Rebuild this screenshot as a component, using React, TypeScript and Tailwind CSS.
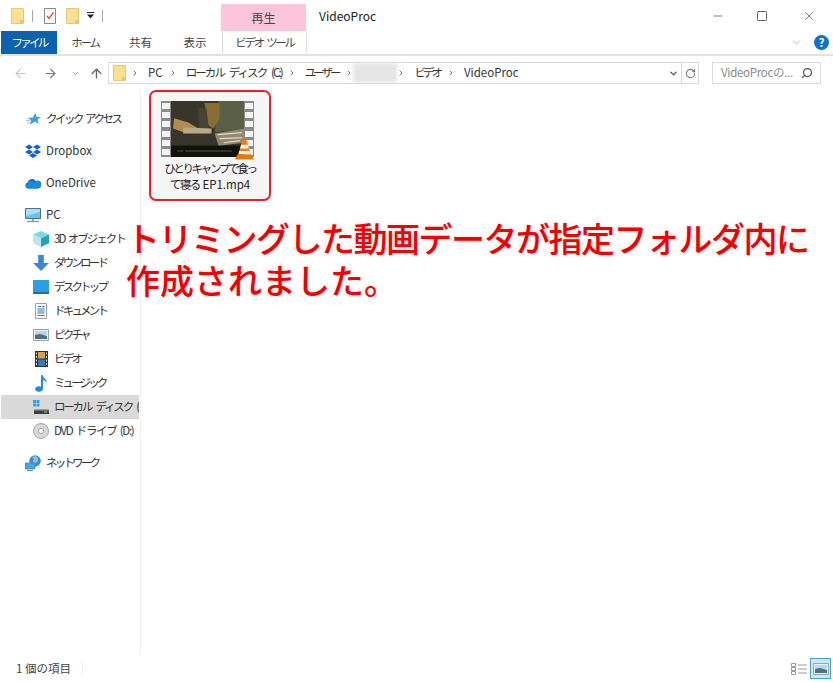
import { ArrowLeft, ArrowRight, ArrowUp, ChevronDown, ChevronRight, RotateCw, Search, X, Minus, Square } from 'lucide-react'
import type { ReactNode } from 'react'

const font = "font-['Noto_Sans_CJK_JP','Noto_Sans',sans-serif]"

function Folder({ className = 'w-[13px] h-[16px]' }: { className?: string }) {
    return (
        <svg viewBox="0 0 13 16" className={className}>
            <path d="M.5.5h12v15H.5z" fill="#fbe08f" stroke="#e6c877" />
            <path d="M9 12h3.5v3.5H9z" fill="#e9c566" />
        </svg>
    )
}

function Chevron() {
    return <ChevronRight className="w-[8px] h-[8px] text-[#777] shrink-0" strokeWidth={3} />
}

function Star() {
    return (
        <svg viewBox="0 0 16 16" className="w-[15px] h-[15px]">
            <path d="M10 .8l1.400 4.400 4.400.2-3.500 2.800 1.200 4.600-3.800-2.600L4 13.500l1.600-4.700L1.500 6h5.600z" fill="#3b9fe0" />
            <path d="M0 9h5M1 11.500h3" stroke="#8ec8ee" strokeWidth="1" />
        </svg>
    )
}

function Dropbox() {
    return (
        <svg viewBox="0 0 16 15" className="w-[16px] h-[15px]">
            <path d="M4 .5L8 3 4 5.500 0 3zM12 .5L16 3l-4 2.500L8 3zM4 5.500L8 8l-4 2.500L0 8zM12 5.500L16 8l-4 2.500L8 8zM8 9l4 2.500L8 14l-4-2.500z" fill="#0d62d6" />
        </svg>
    )
}

function OneDrive() {
    return (
        <svg viewBox="0 0 16 11" className="w-[16px] h-[11px]">
            <path d="M3 10.500a3 3 0 0 1-.4-5.900A4.600 4.600 0 0 1 11 3.200a3.400 3.400 0 0 1 5 3.100V7a3.500 3.500 0 0 1-3.500 3.500z" fill="#0b72c9" />
            <path d="M3 10.500a2.600 2.600 0 0 1 0-5 4 4 0 0 1 7-1 3.400 3.400 0 0 1 6 3.500 3.500 3.500 0 0 1-3.500 2.500z" fill="#1b8ad8" />
        </svg>
    )
}

function Monitor() {
    return (
        <svg viewBox="0 0 16 15" className="w-[16px] h-[15px]">
            <path d="M.5.5h15v10H.5z" fill="#67c3f2" stroke="#5a6b7c" />
            <path d="M1 1h14v3L1 8z" fill="#a8e0f9" />
            <path d="M2 13.500h12" stroke="#8a9aa8" strokeWidth="1.400" />
            <path d="M7 11h2v2H7z" fill="#9aa" />
        </svg>
    )
}

function Cube() {
    return (
        <svg viewBox="0 0 16 16" className="w-[16px] h-[16px]">
            <path d="M8 0l8 3.600-8 3.600L0 3.600z" fill="#7fd7e3" />
            <path d="M0 3.600l8 3.600V16l-8-3.800z" fill="#b9e7ec" />
            <path d="M16 3.600L8 7.200V16l8-3.800z" fill="#21a3b8" />
        </svg>
    )
}

function Down() {
    return (
        <svg viewBox="0 0 16 16" className="w-[16px] h-[16px]">
            <path d="M5.200 0h5.600v8H16l-8 8-8-8h5.200z" fill="#3b86d6" />
        </svg>
    )
}

function Desktop() {
    return (
        <svg viewBox="0 0 16 14" className="w-[16px] h-[14px]">
            <path d="M0 0h16v12H0z" fill="#2d9de6" />
            <path d="M0 12h16v2H0z" fill="#1c6fb0" />
        </svg>
    )
}

function Doc() {
    return (
        <svg viewBox="0 0 12 16" className="w-[12px] h-[16px]">
            <path d="M.5.5h11v15H.5z" fill="#f6f8fa" stroke="#9aa3ab" />
            <path d="M3 3.500h3M7 3.500h2.500M2.500 6h7M2.500 8h7M2.500 10h7M2.500 12.500h7" stroke="#3c7fb8" strokeWidth="1" />
        </svg>
    )
}

function Picture() {
    return (
        <svg viewBox="0 0 16 12" className="w-[16px] h-[12px]">
            <path d="M.5.5h15v11H.5z" fill="#eef1f3" stroke="#9aa3ab" />
            <path d="M2 2h12v4H2z" fill="#b8d7ea" />
            <path d="M2 6l5-1 7 2v3H2z" fill="#4c7184" />
        </svg>
    )
}

function Film() {
    return (
        <svg viewBox="0 0 13 16" className="w-[13px] h-[16px]">
            <path d="M0 0h13v16H0z" fill="#333" />
            <path d="M3 1h7v6.500H3z" fill="#d8a24a" />
            <path d="M3 8.500h7V15H3z" fill="#2f79c6" />
            <path d="M1 1.500h1v2H1zM1 5h1v2H1zM1 8.500h1v2H1zM1 12h1v2H1zM11 1.500h1v2h-1zM11 5h1v2h-1zM11 8.500h1v2h-1zM11 12h1v2h-1z" fill="#ddd" />
        </svg>
    )
}

function Note() {
    return (
        <svg viewBox="0 0 12 17" className="w-[12px] h-[17px]">
            <ellipse cx="4" cy="14" rx="3.800" ry="2.800" fill="#1f8fe0" />
            <path d="M6 14V0h1.600c.4 3 4.400 4 4 8-.8-1.600-2-2.600-3.600-3v9z" fill="#1f8fe0" />
        </svg>
    )
}

function Disk() {
    return (
        <svg viewBox="0 0 16 15" className="w-[16px] h-[15px]">
            <path d="M0 0h3v3H0zM3.500 0h3v3h-3zM0 3.500h3v3H0zM3.500 3.500h3v3h-3z" fill="#29a8e8" />
            <path d="M1 10h15v4H1z" fill="#3a3f42" />
            <path d="M1 9h15v1.500H1z" fill="#9aa1a5" />
            <path d="M11 11.500h3v1h-3z" fill="#7fe07f" />
        </svg>
    )
}

function Dvd() {
    return (
        <svg viewBox="0 0 16 16" className="w-[16px] h-[16px]">
            <circle cx="8" cy="8" r="7.500" fill="#d6d8d9" stroke="#a4a8aa" />
            <circle cx="8" cy="8" r="2.600" fill="#f2f3f3" stroke="#a4a8aa" />
        </svg>
    )
}

function Network() {
    return (
        <svg viewBox="0 0 16 17" className="w-[16px] h-[17px]">
            <circle cx="10" cy="6" r="5.800" fill="#3f8fd0" />
            <path d="M7 2c2 1 2 3 1 4s2 3 4 1 1-4-1-6z" fill="#8fc0e4" />
            <path d="M0 8h10v6H0z" fill="#45a8e6" stroke="#3a78a8" strokeWidth=".6" />
            <path d="M2 15.500h6" stroke="#6b8ba3" strokeWidth="1.200" />
        </svg>
    )
}

function Cone({ className }: { className: string }) {
    return (
        <svg viewBox="0 0 18 20" className={className}>
            <path d="M7 1h4l4 14H3z" fill="#f57c00" />
            <path d="M5.800 5.500h6.400l1 3.500H4.800z" fill="#f4f4f4" />
            <path d="M4 11.500h10l.8 3H3.200z" fill="#f0f0f0" />
            <path d="M2 15h14l2 4.500H0z" fill="#e67a00" />
        </svg>
    )
}

// left and right strip of the film frame
function Sprockets() {
    return (
        <div className="w-[10px] h-full bg-[#8a8a8a] flex flex-col justify-between px-[1px] py-[2px] shrink-0">
            {[0, 1, 2, 3, 4, 5].map((i) => (
                <div key={i} className="h-[6px] bg-[#f4f4f4]" />
            ))}
        </div>
    )
}

function Thumbnail() {
    return (
        <div className="flex-1 h-full overflow-hidden bg-[#15150f]">
            <svg viewBox="0 0 72 55" className="w-full h-full blur-[0.5px]" preserveAspectRatio="none">
                <path d="M0 0h72v44H0z" fill="#38362a" />
                <path d="M47 0h25v27l-29 4z" fill="#5a5f46" />
                <path d="M33 2h15v15l-6 10-5-3z" fill="#8a6d32" />
                <path d="M27 7h8l2 20h-9z" fill="#4a4238" />
                <path d="M3 17l14 4 10 6-14 4-11-4z" fill="#b38b50" />
                <path d="M12 26l28 1v5H12z" fill="#b9a98a" />
                <path d="M43 32l29-5v14l-25 3z" fill="#8f8a70" />
                <path d="M46 33l24-2M48 37l22-1M52 41l16-2" stroke="#e3d9c6" strokeWidth="1.200" />
                <path d="M0 44h72v11H0z" fill="#12120d" />
                <path d="M6 49h6M14 49h46" stroke="#55554c" strokeWidth="1" />
            </svg>
        </div>
    )
}

type NavRow = { label: string; icon: ReactNode; tracking: string; sub?: boolean; active?: boolean; top?: string }

const navRows: NavRow[] = [
    { label: 'クイック アクセス', icon: <Star />, tracking: 'tracking-[-2.500px] [word-spacing:3px]' },
    { label: 'Dropbox', icon: <Dropbox />, tracking: 'tracking-normal', top: 'mt-[8px]' },
    { label: 'OneDrive', icon: <OneDrive />, tracking: 'tracking-normal', top: 'mt-[8px]' },
    { label: 'PC', icon: <Monitor />, tracking: 'tracking-normal', top: 'mt-[8px]' },
    { label: '3D オブジェクト', icon: <Cube />, tracking: 'tracking-[-2px] [word-spacing:3px]', sub: true },
    { label: 'ダウンロード', icon: <Down />, tracking: 'tracking-[-2.800px]', sub: true },
    { label: 'デスクトップ', icon: <Desktop />, tracking: 'tracking-[-2.800px]', sub: true },
    { label: 'ドキュメント', icon: <Doc />, tracking: 'tracking-[-2.800px]', sub: true },
    { label: 'ピクチャ', icon: <Picture />, tracking: 'tracking-[-2.800px]', sub: true },
    { label: 'ビデオ', icon: <Film />, tracking: 'tracking-[-2.700px]', sub: true },
    { label: 'ミュージック', icon: <Note />, tracking: 'tracking-[-2.900px]', sub: true },
    { label: 'ローカル ディスク (C:)', icon: <Disk />, tracking: 'tracking-[-2.200px] [word-spacing:4px]', sub: true, active: true },
    { label: 'DVD ドライブ (D:)', icon: <Dvd />, tracking: 'tracking-[-1.300px] [word-spacing:2px]', sub: true },
    { label: 'ネットワーク', icon: <Network />, tracking: 'tracking-[-2.800px]', top: 'mt-[8px]' },
]

export default function App() {
    return (
        <div className={`${font} relative w-[833px] h-[682px] bg-white overflow-hidden flex flex-col text-[#1f1f1f]`}>
            {/* title bar */}
            <div className="h-[31px] flex items-end shrink-0">
                <div className="flex items-center h-[31px] pl-[11px] w-[221px]">
                    <Folder />
                    <div className="w-px h-[12px] bg-[#aaa] ml-[8px]" />
                    <svg viewBox="0 0 12 16" className="w-[12px] h-[16px] ml-[11px]">
                        <path d="M.5.5h11v15H.5z" fill="#fafafa" stroke="#8a8a8a" />
                        <path d="M3 8l2 2.500L9.500 4.500" fill="none" stroke="#d9572b" strokeWidth="1.300" />
                    </svg>
                    <Folder className="w-[13px] h-[16px] ml-[10px]" />
                    <svg viewBox="0 0 7 7" className="w-[7px] h-[7px] ml-[8px]">
                        <path d="M0 0h7v1H0zM0 2.500h7L3.500 6.500z" fill="#222" />
                    </svg>
                    <div className="w-px h-[12px] bg-[#aaa] ml-[8px]" />
                </div>
                <div className="w-[85px] h-[27px] bg-[#fdc5dc] flex items-center justify-center text-[12px] text-[#444]">再生</div>
                <div className="ml-[13px] h-[31px] flex items-center text-[12px] text-[#222]">VideoProc</div>
                <div className="ml-auto h-[31px] flex items-center">
                    <Minus className="w-[14px] h-[14px] text-[#222] mr-[31px]" strokeWidth={1} />
                    <Square className="w-[12px] h-[12px] text-[#222] mr-[34px]" strokeWidth={1.400} />
                    <X className="w-[14px] h-[14px] text-[#222] mr-[17px]" strokeWidth={1} />
                </div>
            </div>

            {/* ribbon tabs */}
            <div className="h-[25px] flex items-start border-b-2 border-[#e2e2e2] shrink-0 text-[11.500px] text-[#444]">
                <div className="ml-px w-[56px] h-[23px] bg-[#0b62ae] text-white flex items-center justify-center tracking-[-2.700px]">ファイル</div>
                <div className="w-[56px] h-[23px] flex items-center justify-center tracking-[-2.300px]">ホーム</div>
                <div className="w-[55px] h-[23px] flex items-center justify-center">共有</div>
                <div className="w-[54px] h-[23px] flex items-center justify-center">表示</div>
                <div className="w-[85px] h-[23px] border-x border-[#dcdcdc] flex items-center justify-center tracking-[-2.300px] [word-spacing:3px]">ビデオ ツール</div>
                <div className="ml-auto flex items-center h-[23px]">
                    <ChevronDown className="w-[13px] h-[13px] text-[#aaa] mr-[11px]" strokeWidth={1.500} />
                    <div className="w-[15px] h-[15px] rounded-full bg-[#1471c9] text-white text-[11px] font-bold flex items-center justify-center mr-[4px]">?</div>
                </div>
            </div>

            {/* address bar */}
            <div className="h-[34px] flex items-center shrink-0">
                <ArrowLeft className="w-[15px] h-[15px] text-[#c4c4c4] ml-[13px]" strokeWidth={1.800} />
                <ArrowRight className="w-[15px] h-[15px] text-[#777] ml-[15px]" strokeWidth={1.800} />
                <ChevronDown className="w-[9px] h-[9px] text-[#888] ml-[13px]" strokeWidth={2.500} />
                <ArrowUp className="w-[15px] h-[15px] text-[#666] ml-[9px]" strokeWidth={2.200} />
                <div className="ml-[4px] w-[574px] h-[22px] border border-[#d9d9d9] flex items-center text-[11.500px] text-[#333] whitespace-nowrap">
                    <div className="ml-[4px] flex"><Folder className="w-[13px] h-[16px]" /></div>
                    <span className="w-[5px]" />
                    <Chevron />
                    <span className="ml-[9px]">PC</span>
                    <span className="w-[6px]" />
                    <Chevron />
                    <span className="ml-[9px] w-[93px] tracking-[-1.900px] [word-spacing:4px]">ローカル ディスク (C:)</span>
                    <span className="w-[9px]" />
                    <Chevron />
                    <span className="ml-[9px] tracking-[-3px]">ユーザー</span>
                    <span className="w-[7px]" />
                    <Chevron />
                    <div className="w-[44px] h-[20px] bg-[#e4e4e4] blur-[2px]" />
                    <Chevron />
                    <span className="ml-[9px] tracking-[-3px]">ビデオ</span>
                    <span className="w-[7px]" />
                    <Chevron />
                    <span className="ml-[9px]">VideoProc</span>
                    <ChevronDown className="ml-auto w-[11px] h-[11px] text-[#555] mr-[2px]" strokeWidth={3} />
                </div>
                <div className="w-[17px] h-[22px] border-y border-r border-[#d9d9d9] flex items-center justify-center">
                    <RotateCw className="w-[11px] h-[11px] text-[#777]" strokeWidth={2.200} />
                </div>
                <div className="ml-[13px] w-[109px] h-[22px] border border-[#d9d9d9] flex items-center justify-between pl-[8px] pr-[7px] text-[11.500px] text-[#8a8a8a] whitespace-nowrap">
                    <span className="tracking-[-0.300px]">VideoProcの...</span>
                    <Search className="w-[12px] h-[12px] text-[#555] -scale-x-100" strokeWidth={2.500} />
                </div>
            </div>

            {/* body */}
            <div className="flex-1 flex min-h-0">
                <div className="w-[141px] border-r border-[#f0f0f0] pt-[17px] shrink-0 overflow-hidden">
                    {navRows.map((row) => (
                        <div
                            key={row.label}
                            className={`${row.top ?? ''} ${row.active ? 'bg-[#d9d9d9]' : ''} ${row.sub ? 'pl-[33px]' : 'pl-[25px]'} h-[24px] ml-px w-[138px] flex items-center whitespace-nowrap overflow-hidden text-[11.500px] text-[#333]`}
                        >
                            <div className="w-[16px] flex justify-center shrink-0 -ml-[1px]">{row.icon}</div>
                            <span className={`ml-[5px] ${row.tracking}`}>{row.label}</span>
                        </div>
                    ))}
                </div>

                <div className="flex-1 pl-[8px]">
                    <div className="w-[122px] h-[111px] rounded-[7px] border-2 border-[#e8202c] bg-[#f5f5f5] flex flex-col pt-[9px]">
                        <div className="relative w-[93px] h-[56px] ml-[10px] flex">
                            <Sprockets />
                            <Thumbnail />
                            <Sprockets />
                            <Cone className="absolute right-0 -bottom-[3px] w-[19px] h-[21px]" />
                        </div>
                        <div className="mt-[3px] text-center text-[11.500px] leading-[16px] text-[#222] whitespace-nowrap">
                            <span className="tracking-[-2.300px]">ひとりキャンプで食っ</span>
                            <br />
                            <span className="tracking-[-1.500px]">て寝る</span> EP1.mp4
                        </div>
                    </div>
                </div>
            </div>

            {/* status bar */}
            <div className="h-[27px] flex items-center shrink-0 text-[11.500px] text-[#444]">
                <span className="ml-[16px]">1 個の項目</span>
                <div className="ml-[11px] w-px h-[14px] bg-[#eee]" />
                <div className="ml-auto flex items-center mr-[2px]">
                    <svg viewBox="0 0 16 16" className="w-[16px] h-[16px] mr-[3px]">
                        <path d="M.5 2.500h4v3h-4zM.5 6.500h4v3h-4zM.5 10.500h4v3h-4z" fill="none" stroke="#999" />
                        <path d="M7 4h9M7 8h9M7 12h9" stroke="#999" />
                    </svg>
                    <div className="w-[21px] h-[21px] border border-[#47a3c8] bg-[#cfe8f5] flex items-center justify-center">
                        <Picture />
                    </div>
                </div>
            </div>

            {/* annotation */}
            <div className="absolute left-[126px] top-[217px] text-[34px] leading-[42px] font-medium text-[#f00000] whitespace-nowrap [text-shadow:0_0_4px_rgba(0,0,0,0.12)]">
                <div className="tracking-[-1.500px]">トリミングした動画データが指定フォルダ内に</div>
                <div>作成されました。</div>
            </div>
        </div>
    )
}
